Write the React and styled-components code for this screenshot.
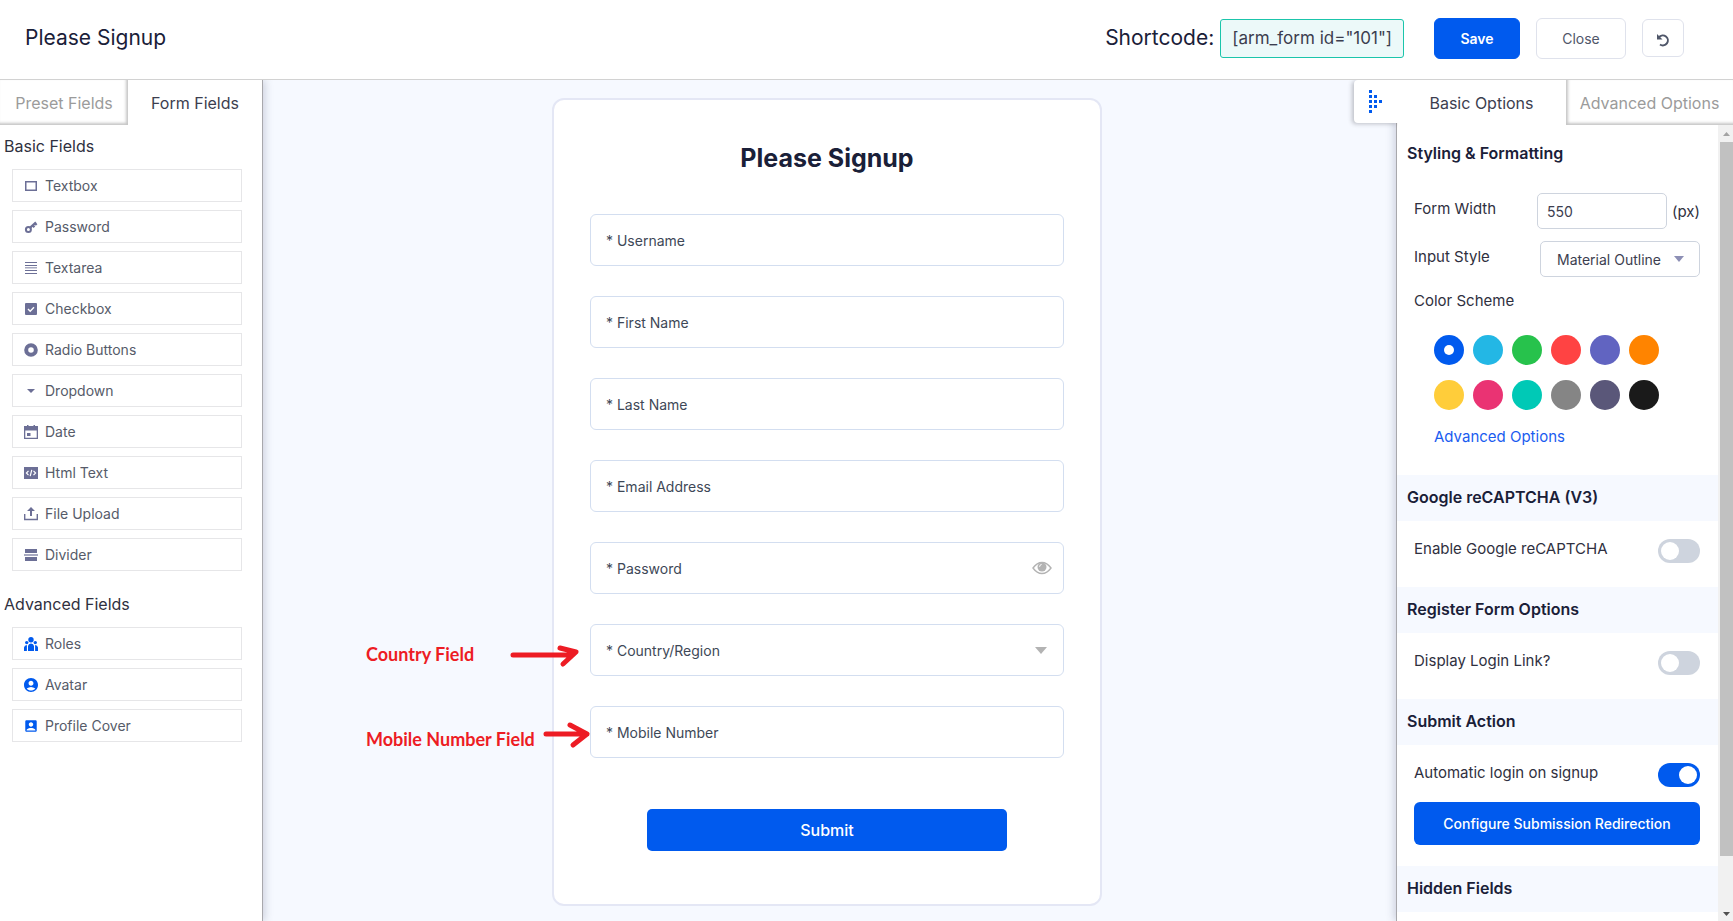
import React, { useState } from "react";
import styled, { createGlobalStyle } from "styled-components";
import { MdAccountBox, MdAccountCircle } from "react-icons/md";

const colors = {
  primary: "#005aee",
  canvas: "#f6f9ff",
  heading: "#1a2038",
  text: "#3c3e4f",
  label: "#2f3040",
  muted: "#9b9b9b",
  icon: "#6c6f96",
  line: "#d2d2d2",
  fieldLine: "#d3def0",
  controlLine: "#ced4de",
  marker: "#ed1c24",
};

const GlobalStyle = createGlobalStyle`
  * {
    box-sizing: border-box;
  }

  body {
    margin: 0;
    font-family: Inter, "Open Sans", sans-serif;
    color: ${colors.text};
    background: #fff;
  }

  button,
  input,
  select {
    font-family: inherit;
  }

  h1, h2, h3, p, ul {
    margin: 0;
    padding: 0;
  }
`;

const Page = styled.div`
  display: grid;
  grid-template-rows: auto minmax(0, 1fr);
  height: 100vh;
`;

// Top bar
const Header = styled.header`
  position: relative;
  z-index: 2;
  display: flex;
  align-items: center;
  height: 80px;
  padding: 0 49px 3px 25px;
  background: #fff;
  border-bottom: 1px solid ${colors.line};
`;

const FormName = styled.h1`
  flex: 1;
  font-size: 21px;
  font-weight: 400;
  line-height: 30px;
  color: ${colors.heading};
`;

const ShortcodeLabel = styled.span`
  margin-right: 6px;
  font-size: 21px;
  line-height: 30px;
  color: ${colors.heading};
`;

const Shortcode = styled.code`
  margin-right: 30px;
  padding: 0 11px;
  font-family: inherit;
  font-size: 17px;
  line-height: 37px;
  color: ${colors.text};
  background: #ecf9f9;
  border: 1px solid #1bc5ab;
  border-radius: 3px;
`;

const HeaderButton = styled.button`
  height: ${(props) => (props.$icon ? 38 : 41)}px;
  width: ${(props) => (props.$icon ? 42 : props.$primary ? 86 : 90)}px;
  margin-right: ${(props) => (props.$icon ? 0 : 16)}px;
  padding: 0;
  font-size: 14px;
  font-weight: ${(props) => (props.$primary ? 600 : 400)};
  color: ${(props) => (props.$primary ? "#fff" : "#4f5669")};
  background: ${(props) => (props.$primary ? colors.primary : "#fff")};
  border: 1px solid ${(props) => (props.$primary ? colors.primary : "#dfe2ec")};
  border-radius: 6px;

  svg {
    vertical-align: middle;
  }
`;

// Three column body
const Body = styled.main`
  display: grid;
  grid-template-columns: 263px minmax(0, 1fr) 337px;
  min-height: 0;
`;

const LeftPanel = styled.aside`
  z-index: 1;
  background: #fff;
  border-right: 1px solid #a8a8ac;
  box-shadow: 2px 0 8px rgba(60, 70, 100, 0.22);
`;

const Tabs = styled.div`
  display: grid;
  grid-template-columns: ${(props) => props.$columns};
  height: 45px;
`;

const Tab = styled.button`
  padding: 0;
  font-size: 16px;
  white-space: nowrap;
  color: ${(props) => (props.$active ? colors.text : colors.muted)};
  background: #fff;
  border: 0;
  box-shadow: ${(props) =>
    props.$active ? "none" : `inset ${props.$edge}px -2px 3px 0 #c6c6c6`};
`;

const FieldGroup = styled.section`
  padding: 6px 20px 12px 12px;
`;

const GroupTitle = styled.h2`
  margin: 0 0 8px -8px;
  font-size: 16px;
  font-weight: 400;
  line-height: 30px;
  color: ${colors.label};
`;

const FieldList = styled.ul`
  display: grid;
  gap: 8px;
  list-style: none;
`;

const FieldButton = styled.button`
  display: flex;
  align-items: center;
  gap: 7px;
  width: 100%;
  height: 33px;
  padding: 0 11px;
  font-size: 14px;
  color: #565b69;
  background: #fff;
  border: 1px solid #e6e6e8;

  svg {
    flex: none;
    width: 14px;
    height: 14px;
    color: ${(props) => (props.$advanced ? colors.primary : colors.icon)};
  }
`;

// Form preview
const Canvas = styled.section`
  display: flex;
  justify-content: center;
  align-items: flex-start;
  padding: 18px 5px 15px 0;
  background: ${colors.canvas};
`;

const Card = styled.form`
  position: relative;
  width: 550px;
  padding: 40px 36px 53px;
  background: #fff;
  border: 2px solid #e4e7f5;
  border-radius: 12px;
`;

const CardTitle = styled.h2`
  margin-bottom: 38px;
  font-size: 25px;
  font-weight: 700;
  line-height: 36px;
  text-align: center;
  color: ${colors.heading};
`;

const FormFields = styled.div`
  display: grid;
  gap: 30px;
`;

const Field = styled.div`
  display: flex;
  align-items: center;
  height: 52px;
  padding-right: ${(props) => (props.$select ? 16 : 11)}px;
  border: 1px solid ${colors.fieldLine};
  border-radius: 6px;

  > svg {
    flex: none;
  }
`;

const FieldInput = styled.input`
  flex: 1;
  min-width: 0;
  height: 100%;
  padding: 0 15px;
  font-size: 14px;
  color: #3e4857;
  background: none;
  border: 0;
  appearance: none;

  &::placeholder {
    color: #3e4857;
  }
`;

const SubmitButton = styled.button`
  display: block;
  width: 360px;
  height: 42px;
  margin: 51px auto 0;
  font-size: 16px;
  font-weight: 500;
  color: #fff;
  background: ${colors.primary};
  border: 0;
  border-radius: 5px;
`;

// Red callouts which lie over the preview, tied to the card
const Callout = styled.div`
  position: absolute;
  top: ${(props) => props.$top}px;
  left: -188px;
  display: flex;
  align-items: center;
  gap: ${(props) => props.$gap}px;
  font-family: Lato, sans-serif;
  font-size: 18px;
  font-weight: 700;
  line-height: 24px;
  white-space: nowrap;
  color: ${colors.marker};

  svg {
    align-self: flex-start;
    overflow: visible;
  }
`;

// Options panel
const RightPanel = styled.aside`
  position: relative;
  display: grid;
  grid-template-rows: auto minmax(0, 1fr);
  background: #fff;
  border-left: 1px solid #a8a8ac;
  box-shadow: -2px 0 8px rgba(60, 70, 100, 0.22);
`;

const CollapseButton = styled.button`
  position: absolute;
  top: 0;
  right: 100%;
  display: flex;
  align-items: center;
  width: 44px;
  height: 43px;
  margin-right: -1px;
  padding: 0 0 0 15px;
  background: #fff;
  border: 0;
  border-radius: 4px 0 0 4px;
  box-shadow: -2px 1px 4px rgba(60, 60, 70, 0.3);
  clip-path: inset(0 0 -8px -8px);
`;

const OptionsScroll = styled.div`
  display: grid;
  grid-template-columns: minmax(0, 1fr) 15px;
  min-height: 0;
`;

const Options = styled.div`
  overflow: hidden;
`;

const SectionTitle = styled.h3`
  height: 46px;
  padding: 0 10px;
  font-size: 16px;
  font-weight: 600;
  line-height: ${(props) => (props.$plain ? 56 : 44)}px;
  color: ${colors.heading};
  background: ${(props) => (props.$plain ? "#fff" : colors.canvas)};
`;

const SectionBody = styled.div`
  padding: ${(props) => props.$padding};
`;

const OptionRow = styled.div`
  display: flex;
  align-items: flex-start;
  justify-content: space-between;
  height: ${(props) => props.$height}px;
`;

const OptionLabel = styled.label`
  font-size: 15px;
  line-height: ${(props) => (props.$control ? 32 : 20)}px;
  color: ${colors.label};
`;

const WidthControl = styled.div`
  display: flex;
  align-items: center;
  gap: 5px;
  font-size: 15px;
  color: ${colors.label};
`;

const WidthInput = styled.input`
  width: 130px;
  height: 36px;
  padding: 0 9px;
  font-size: 14px;
  color: ${colors.text};
  border: 1px solid ${colors.controlLine};
  border-radius: 5px;
`;

const SelectBox = styled.div`
  display: flex;
  align-items: center;
  width: 160px;
  height: 36px;
  padding-right: 15px;
  border: 1px solid ${colors.controlLine};
  border-radius: 5px;
`;

const StyleSelect = styled.select`
  flex: 1;
  min-width: 0;
  height: 100%;
  padding: 0 0 0 16px;
  font-size: 14px;
  color: ${colors.text};
  background: none;
  border: 0;
  appearance: none;
`;

const SchemeGroup = styled.fieldset`
  margin: 0;
  padding: 0;
  border: 0;
`;

const SchemeLegend = styled.legend`
  padding: 0;
  font-size: 15px;
  line-height: 24px;
  color: ${colors.label};
`;

const Swatches = styled.div`
  display: grid;
  grid-template-columns: repeat(6, 30px);
  gap: 15px 9px;
  padding: 22px 0 0 20px;
`;

const Swatch = styled.input`
  display: grid;
  place-items: center;
  width: 30px;
  height: 30px;
  margin: 0;
  background: ${(props) => props.$color};
  border-radius: 50%;
  appearance: none;

  &:checked::before {
    content: "";
    width: 10px;
    height: 10px;
    background: #fff;
    border-radius: 50%;
  }
`;

const AdvancedLink = styled.a`
  display: block;
  margin: 16px 0 0 20px;
  font-size: 15px;
  line-height: 22px;
  color: #1a5cf0;
  text-decoration: none;
`;

const Switch = styled.input`
  display: flex;
  align-items: center;
  width: 42px;
  height: 24px;
  margin: 0;
  padding: 0 3px;
  background: ${colors.controlLine};
  border-radius: 12px;
  appearance: none;

  &::before {
    content: "";
    width: 18px;
    height: 18px;
    background: #fff;
    border-radius: 50%;
  }

  &:checked {
    justify-content: flex-end;
    background: ${colors.primary};
  }
`;

const WideButton = styled.button`
  width: 100%;
  height: 43px;
  padding: 0;
  font-size: 14px;
  font-weight: 500;
  color: #fff;
  background: ${colors.primary};
  border: 0;
  border-radius: 6px;
`;

const Scrollbar = styled.div`
  display: grid;
  grid-template-rows: 17px 15fr 1fr 17px;
  justify-items: end;
  background: #f1f1f1;
`;

const ScrollThumb = styled.div`
  width: 13px;
  background: #c1c1c1;
`;

const ScrollArrow = styled.svg`
  width: 13px;
  height: 17px;
  grid-row: ${(props) => props.$row};
`;

const Glyph = ({ children }) => (
  <svg viewBox="0 0 14 14" fill="currentColor" aria-hidden="true">
    {children}
  </svg>
);

const icons = {
  textbox: (
    <Glyph>
      <path d="M1 2h12v10H1zM2.500 3.500v7h9v-7z" fillRule="evenodd" />
    </Glyph>
  ),
  password: (
    <Glyph>
      <circle cx="4.4" cy="9.4" r="2.5" fill="none" stroke="currentColor" strokeWidth="2" />
      <path d="M6.2 7.6l5.8-5.2M8.8 5.4l1.6 1.9M11 3.3l1.6 1.8" fill="none" stroke="currentColor" strokeWidth="2.2" />
    </Glyph>
  ),
  textarea: (
    <Glyph>
      <path d="M1 1h12v1H1zM1 4h12v1H1zM1 9h12v1H1zM1 12h12v1H1z" />
      <path d="M1 6h12v1.500H1z" opacity="0.6" />
    </Glyph>
  ),
  checkbox: (
    <Glyph>
      <rect x="1" y="1" width="12" height="12" rx="1" />
      <path d="M4 7l2.2 2.2L10 5.3" fill="none" stroke="#fff" strokeWidth="1.4" />
    </Glyph>
  ),
  radio: (
    <Glyph>
      <circle cx="7" cy="7" r="4.8" fill="none" stroke="currentColor" strokeWidth="4" />
    </Glyph>
  ),
  dropdown: (
    <Glyph>
      <path d="M3 5h8L7 9z" />
    </Glyph>
  ),
  date: (
    <Glyph>
      <path d="M3 0h1.5v1h5V0H11v1h3v13H0V1h3zM1.3 5.5v7.2h11.4V5.5z" fillRule="evenodd" />
      <path d="M3 8h3.5v3H3z" />
    </Glyph>
  ),
  html: (
    <Glyph>
      <path d="M0 1h14v12H0z" />
      <path d="M4.5 4.8L2.4 7l2.1 2.2M9.5 4.8L11.6 7 9.5 9.2M7.8 3.8L6.2 10.2" fill="none" stroke="#fff" strokeWidth="1.2" />
    </Glyph>
  ),
  upload: (
    <Glyph>
      <path d="M7 0l4 4H8v5H6V4H3z" />
      <path d="M.7 7v5.5h12.6V7" fill="none" stroke="currentColor" strokeWidth="1.4" />
    </Glyph>
  ),
  divider: (
    <Glyph>
      <path d="M1 1h12v4H1zM1 9h12v4H1z" />
      <path d="M0 6h14v2H0z" opacity="0.6" />
    </Glyph>
  ),
  roles: (
    <Glyph>
      <circle cx="7" cy="2.8" r="2.7" />
      <circle cx="2.7" cy="5.6" r="1.7" />
      <circle cx="11.3" cy="5.6" r="1.7" />
      <path d="M4 14V9q.4-2.6 3-2.6T10 9v5zM0 14v-3.500Q.4 8 2.900 8v6zM14 14v-3.500Q13.600 8 11.100 8v6z" />
    </Glyph>
  ),
  avatar: <MdAccountCircle viewBox="2 2 20 20" />,
  profileCover: <MdAccountBox viewBox="1 1 22 22" />,
};

const UndoIcon = () => (
  <svg width="14" height="14" viewBox="0 0 14 14" fill="none" stroke="#4f5669" strokeWidth="2" aria-hidden="true">
    <path d="M3 4.200A5 5 0 1 1 4 11.500" />
    <path d="M1 1v5.500h5.500z" strokeWidth="0" fill="#4f5669" />
  </svg>
);

const EyeIcon = () => (
  <svg width="20" height="14" viewBox="0 0 20 14" aria-hidden="true">
    <path d="M1 7Q5 1.500 10 1.500T19 7Q15 12.500 10 12.500T1 7z" fill="none" stroke="#b3b3b3" strokeWidth="1.4" />
    <circle cx="10" cy="6" r="4.500" fill="#b3b3b3" />
    <path d="M7.600 5.800a2.400 2.400 0 0 1 2-2.400" fill="none" stroke="#fff" strokeWidth="1" />
  </svg>
);

const Caret = ({ color, width = 10, height = 6 }) => (
  <svg width={width} height={height} viewBox="0 0 10 6" preserveAspectRatio="none" aria-hidden="true">
    <path d="M0 0h10L5 6z" fill={color} />
  </svg>
);

const Arrow = ({ width, d }) => (
  <svg
    width={width}
    height="24"
    fill="none"
    stroke={colors.marker}
    strokeWidth="5"
    strokeLinecap="round"
    strokeLinejoin="round"
    aria-hidden="true"
  >
    <path d={d} />
  </svg>
);

const basicFields = [
  { label: "Textbox", icon: "textbox" },
  { label: "Password", icon: "password" },
  { label: "Textarea", icon: "textarea" },
  { label: "Checkbox", icon: "checkbox" },
  { label: "Radio Buttons", icon: "radio" },
  { label: "Dropdown", icon: "dropdown" },
  { label: "Date", icon: "date" },
  { label: "Html Text", icon: "html" },
  { label: "File Upload", icon: "upload" },
  { label: "Divider", icon: "divider" },
];

const advancedFields = [
  { label: "Roles", icon: "roles" },
  { label: "Avatar", icon: "avatar" },
  { label: "Profile Cover", icon: "profileCover" },
];

const formFields = [
  { label: "Username" },
  { label: "First Name" },
  { label: "Last Name" },
  { label: "Email Address", type: "email" },
  { label: "Password", type: "password" },
  { label: "Country/Region", type: "select" },
  { label: "Mobile Number", type: "tel" },
];

const schemes = [
  { name: "Blue", color: "#005aee" },
  { name: "Light blue", color: "#23b7e5" },
  { name: "Green", color: "#27c24c" },
  { name: "Red", color: "#ff4343" },
  { name: "Purple", color: "#6164c1" },
  { name: "Orange", color: "#ff8400" },
  { name: "Yellow", color: "#ffcd3a" },
  { name: "Pink", color: "#ea3373" },
  { name: "Teal", color: "#00c9b6" },
  { name: "Gray", color: "#858585" },
  { name: "Slate", color: "#5a5779" },
  { name: "Black", color: "#1a1a1a" },
];

const FieldPalette = ({ title, fields, advanced }) => (
  <FieldGroup>
    <GroupTitle>{title}</GroupTitle>
    <FieldList>
      {fields.map((field) => (
        <li key={field.label}>
          <FieldButton type="button" $advanced={advanced}>
            {icons[field.icon]}
            {field.label}
          </FieldButton>
        </li>
      ))}
    </FieldList>
  </FieldGroup>
);

const PreviewField = ({ label, type = "text" }) => {
  if (type === "select") {
    return (
      <Field $select>
        <FieldInput as="select" aria-label={label}>
          <option>* {label}</option>
        </FieldInput>
        <Caret color="#b3b3b3" width={12} height={7} />
      </Field>
    );
  }
  return (
    <Field>
      <FieldInput type={type} placeholder={`* ${label}`} aria-label={label} />
      {type === "password" && <EyeIcon />}
    </Field>
  );
};

const SwitchRow = ({ id, label, defaultChecked, height }) => (
  <OptionRow $height={height}>
    <OptionLabel htmlFor={id}>{label}</OptionLabel>
    <Switch type="checkbox" role="switch" id={id} defaultChecked={defaultChecked} />
  </OptionRow>
);

const App = () => {
  const [scheme, setScheme] = useState("Blue");

  return (
    <Page>
      <GlobalStyle />
      <Header>
        <FormName>Please Signup</FormName>
        <ShortcodeLabel>Shortcode:</ShortcodeLabel>
        <Shortcode>[arm_form id="101"]</Shortcode>
        <HeaderButton type="button" $primary>Save</HeaderButton>
        <HeaderButton type="button">Close</HeaderButton>
        <HeaderButton type="button" $icon aria-label="Reset">
          <UndoIcon />
        </HeaderButton>
      </Header>

      <Body>
        <LeftPanel>
          <Tabs $columns="128px 1fr">
            <Tab type="button" $edge={-2}>Preset Fields</Tab>
            <Tab type="button" $active>Form Fields</Tab>
          </Tabs>
          <FieldPalette title="Basic Fields" fields={basicFields} />
          <FieldPalette title="Advanced Fields" fields={advancedFields} advanced />
        </LeftPanel>

        <Canvas>
          <Card onSubmit={(e) => e.preventDefault()}>
            <CardTitle>Please Signup</CardTitle>
            <FormFields>
              {formFields.map((field) => (
                <PreviewField key={field.label} {...field} />
              ))}
            </FormFields>
            <SubmitButton>Submit</SubmitButton>
            <Callout $top={542} $gap={35}>
              Country Field
              <Arrow width={70} d="M4 13H63M51 6L67 10L54 22" />
            </Callout>
            <Callout $top={627} $gap={8}>
              Mobile Number Field
              <Arrow width={46} d="M3 7H44M27 -2L44 7L30 18" />
            </Callout>
          </Card>
        </Canvas>

        <RightPanel>
          <CollapseButton type="button" aria-label="Collapse options">
            <svg width="13" height="23" viewBox="0 0 13 23" fill={colors.primary} aria-hidden="true">
              <path d="M0 0h3v3H0zM0 5h3v3H0zM5 5h3v3H5zM0 10h3v3H0zM5 10h3v3H5zM10 10h3v3h-3zM0 15h3v3H0zM5 15h3v3H5zM0 20h3v3H0z" />
            </svg>
          </CollapseButton>
          <Tabs $columns="169px 1fr">
            <Tab type="button" $active>Basic Options</Tab>
            <Tab type="button" $edge={2}>Advanced Options</Tab>
          </Tabs>
          <OptionsScroll>
            <Options>
              <SectionTitle $plain>Styling &amp; Formatting</SectionTitle>
              <SectionBody $padding="22px 18px 27px 17px">
                <OptionRow $height={48}>
                  <OptionLabel $control htmlFor="form-width">Form Width</OptionLabel>
                  <WidthControl>
                    <WidthInput id="form-width" defaultValue="550" />
                    (px)
                  </WidthControl>
                </OptionRow>
                <OptionRow $height={48}>
                  <OptionLabel $control htmlFor="input-style">Input Style</OptionLabel>
                  <SelectBox>
                    <StyleSelect id="input-style">
                      <option>Material Outline</option>
                    </StyleSelect>
                    <Caret color="#8d8fb5" />
                  </SelectBox>
                </OptionRow>
                <SchemeGroup>
                  <SchemeLegend>Color Scheme</SchemeLegend>
                  <Swatches>
                    {schemes.map(({ name, color }) => (
                      <Swatch
                        key={name}
                        type="radio"
                        name="scheme"
                        aria-label={name}
                        $color={color}
                        checked={scheme === name}
                        onChange={() => setScheme(name)}
                      />
                    ))}
                  </Swatches>
                </SchemeGroup>
                <AdvancedLink href="#advanced">Advanced Options</AdvancedLink>
              </SectionBody>

              <SectionTitle>Google reCAPTCHA (V3)</SectionTitle>
              <SectionBody $padding="18px 18px 0 17px">
                <SwitchRow id="recaptcha" label="Enable Google reCAPTCHA" height={48} />
              </SectionBody>

              <SectionTitle>Register Form Options</SectionTitle>
              <SectionBody $padding="18px 18px 0 17px">
                <SwitchRow id="login-link" label="Display Login Link?" height={48} />
              </SectionBody>

              <SectionTitle>Submit Action</SectionTitle>
              <SectionBody $padding="18px 18px 21px 17px">
                <SwitchRow id="auto-login" label="Automatic login on signup" height={39} defaultChecked />
                <WideButton type="button">Configure Submission Redirection</WideButton>
              </SectionBody>

              <SectionTitle>Hidden Fields</SectionTitle>
            </Options>
            <Scrollbar aria-hidden="true">
              <ScrollArrow $row={1} viewBox="0 0 13 17">
                <path d="M3 11h7L6.500 7z" fill="#a3a3a3" />
              </ScrollArrow>
              <ScrollThumb />
              <ScrollArrow $row={4} viewBox="0 0 13 17">
                <path d="M3 8h7l-3.500 4z" fill="#505050" />
              </ScrollArrow>
            </Scrollbar>
          </OptionsScroll>
        </RightPanel>
      </Body>
    </Page>
  );
};

export default App;
